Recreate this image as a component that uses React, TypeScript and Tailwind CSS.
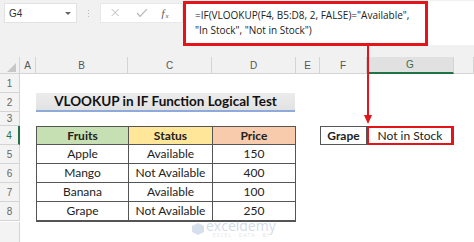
import React from "react";

const cols = [20, 16, 92, 84, 84, 24, 47, 87, 20];
const letters = ["", "A", "B", "C", "D", "E", "F", "G", ""];

const cell = "font-['Lato',sans-serif] text-[12px] text-[#222]";

function RowHead({ n, h, active }: { n: string; h: number; active?: boolean }) {
  return (
    <div
      className={`w-[20px] shrink-0 flex items-center justify-center border-b border-r border-[#d4d4d4] bg-[#f3f3f3] text-[10px] font-['Liberation_Sans',sans-serif] ${active ? "text-[#217346] border-r-[#217346] border-r-2" : "text-[#666]"}`}
      style={{ height: h }}
    >
      {n}
    </div>
  );
}

export default function App() {
  const data = [
    ["Apple", "Available", "150"],
    ["Mango", "Not Available", "400"],
    ["Banana", "Available", "100"],
    ["Grape", "Not Available", "250"],
  ];
  return (
    <div className="relative w-[474px] h-[242px] overflow-hidden bg-white">
      {/* top toolbar */}
      <div className="h-[57px] bg-[#f1f1f1] flex items-start pt-[3px] pl-[4px]">
        <div className="w-[73px] h-[20px] bg-white border border-[#e2e2e2] flex items-center justify-between px-[4px]">
          <span className="font-['Liberation_Sans',sans-serif] text-[10px] text-[#333]">G4</span>
          <span className="w-0 h-0 border-l-[3px] border-r-[3px] border-t-[3px] border-l-transparent border-r-transparent border-t-[#666] mr-[1px]" />
        </div>
        <div className="w-[23px] h-[20px] flex items-center justify-center">
          <div className="flex flex-col gap-[2px]">
            <span className="w-[1px] h-[1px] bg-[#bbb]" />
            <span className="w-[1px] h-[1px] bg-[#bbb]" />
            <span className="w-[1px] h-[1px] bg-[#bbb]" />
          </div>
        </div>
        <div className="w-[83px] h-[20px] bg-white border border-[#e8e8e8] flex items-center">
          <svg width="83" height="20" viewBox="0 0 83 20">
            <path d="M11 6 L18 13 M18 6 L11 13" stroke="#b5b5b5" strokeWidth="1" fill="none" />
            <path d="M37 10 L40 13.5 L47 6" stroke="#b5b5b5" strokeWidth="1.2" fill="none" />
            <text x="62" y="14" fontFamily="Liberation Serif, serif" fontStyle="italic" fontSize="11" fill="#555">f</text>
            <text x="66" y="15" fontFamily="Liberation Serif, serif" fontStyle="italic" fontSize="7" fill="#555">x</text>
          </svg>
        </div>
        <div className="flex-1 h-[44px] -mt-[2px] bg-white" />
      </div>

      {/* formula red box */}
      <div className="absolute left-[183px] top-[1px] w-[245px] h-[45px] border-[3px] border-[#e3151a] pl-[9px] pt-[4px] font-['Open_Sans',sans-serif] text-[10px] leading-[15px] text-[#222]">
        <div>=IF(VLOOKUP(F4, B5:D8, 2, FALSE)="Available",</div>
        <div>"In Stock", "Not in Stock")</div>
      </div>

      {/* column header */}
      <div className="flex h-[17px] bg-[#f1f1f1]">
        {cols.map((w, i) => (
          <div
            key={i}
            className={`shrink-0 flex items-center justify-center border-b border-r border-[#d4d4d4] font-['Liberation_Sans',sans-serif] text-[10px] ${i === 7 ? "bg-[#e1e1e1] text-[#3d6b4f] border-b-2 border-b-[#217346]" : "text-[#555]"}`}
            style={{ width: w }}
          >
            {i === 0 ? (
              <svg width="12" height="12" viewBox="0 0 12 12" className="mt-[3px] ml-[2px]">
                <path d="M11 2 L11 11 L2 11 Z" fill="#c7c7c7" />
              </svg>
            ) : (
              letters[i]
            )}
          </div>
        ))}
      </div>

      {/* rows */}
      <div className="flex flex-col">
        <div className="flex">
          <RowHead n="1" h={19} />
        </div>
        <div className="flex">
          <RowHead n="2" h={19} />
          <div className="w-[16px]" />
          <div className="w-[259px] h-[19px] bg-gradient-to-b from-[#ececec] to-[#e2e2e2] border-b-2 border-[#8eaadb] flex items-center justify-center font-['Lato',sans-serif] font-bold text-[13.5px] text-[#111]">
            VLOOKUP in IF Function Logical Test
          </div>
        </div>
        <div className="flex">
          <RowHead n="3" h={14} />
        </div>
        <div className="flex">
          <RowHead n="4" h={19} active />
          <div className="w-[16px]" />
          <div className="flex border border-[#555] border-b-0">
            <div className={`w-[92px] h-[18px] bg-[#c6e0b4] border-r border-b border-[#555] flex items-center justify-center font-bold ${cell}`}>Fruits</div>
            <div className={`w-[84px] h-[18px] bg-[#ffe699] border-r border-b border-[#555] flex items-center justify-center font-bold ${cell}`}>Status</div>
            <div className={`w-[82px] h-[18px] bg-[#f8cbad] border-b border-[#555] flex items-center justify-center font-bold ${cell}`}>Price</div>
          </div>
          <div className="w-[24px]" />
          <div className={`w-[47px] h-[19px] border border-[#555] flex items-center justify-center font-bold ${cell}`}>Grape</div>
          <div className={`w-[87px] h-[19px] border-2 border-[#e3151a] border-r-[3px] flex items-center justify-center ${cell}`}>Not in Stock</div>
        </div>
        {data.map((r, i) => (
          <div className="flex" key={i}>
            <RowHead n={String(5 + i)} h={19} />
            <div className="w-[16px]" />
            <div className={`flex border-l border-r border-[#555] ${i === 3 ? "border-b" : ""}`}>
              <div className={`w-[92px] h-[19px] border-r border-b border-[#555] flex items-center justify-center ${cell}`}>{r[0]}</div>
              <div className={`w-[84px] h-[19px] border-r border-b border-[#555] flex items-center justify-center ${cell}`}>{r[1]}</div>
              <div className={`w-[82px] h-[19px] border-b border-[#555] flex items-center justify-center ${cell}`}>{r[2]}</div>
            </div>
          </div>
        ))}
        <div className="flex">
          <RowHead n="" h={21} />
        </div>
      </div>

      {/* arrow */}
      <svg className="absolute left-[362px] top-[45px]" width="12" height="80" viewBox="0 0 12 80">
        <line x1="6" y1="0" x2="6" y2="72" stroke="#e3151a" strokeWidth="2" />
        <path d="M2 70 L10 70 L6 79 Z" fill="#e3151a" />
      </svg>

      {/* watermark */}
      <div className="absolute left-[192px] top-[219px] flex items-center gap-[2px] opacity-30">
        <svg width="12" height="12" viewBox="0 0 12 12">
          <path d="M6 0 L12 3 L12 9 L6 12 L0 9 L0 3 Z" fill="#7a9cc6" />
        </svg>
        <div className="flex flex-col items-center leading-none">
          <span className="font-['Open_Sans',sans-serif] text-[14px] text-[#6a8fc0] leading-[14px]">exceldemy</span>
          <span className="font-['Open_Sans',sans-serif] text-[5px] text-[#8aa5c8] tracking-[1px]">EXCEL · DATA · BI</span>
        </div>
      </div>
    </div>
  );
}
